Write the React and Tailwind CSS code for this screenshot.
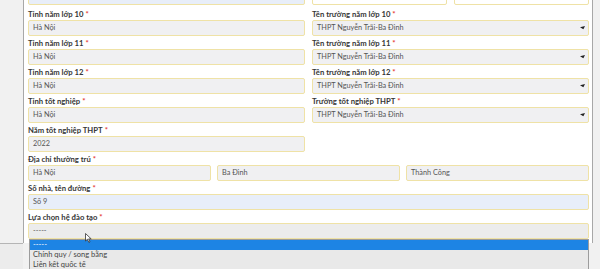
import React from 'react';

const Req = () => <span className="text-[#e53935] ml-[2px]">*</span>;

function Field({ label, children }) {
  return (
    <div className="flex flex-col">
      <div className="h-[13px] flex items-end pb-[1px] text-[7.7px] leading-[9px] font-bold text-[#363636]">
        {label}
        <Req />
      </div>
      {children}
    </div>
  );
}

function Box({ value, select, tone = 'bg-[#f0f0f2]' }) {
  return (
    <div className={`h-[16px] border border-[#efe2a6] rounded-[2px] ${tone} flex items-center justify-between pl-[4px] pr-[3px] text-[7.3px] text-[#555]`}>
      <span>{value}</span>
      {select && (
        <svg width="5" height="4" viewBox="0 0 5 4">
          <path d="M0 1.2 L5 0 L3.4 3.2 Z" fill="#222" />
        </svg>
      )}
    </div>
  );
}

export default function App() {
  const school = 'THPT Nguyễn Trãi-Ba Đình';
  return (
    <div className="relative w-[600px] h-[269px] overflow-hidden flex bg-[#f1f1f1] font-['Lato','Noto_Sans',sans-serif]">
      {/* left gutter */}
      <div className="w-[23px] flex flex-col">
        <div className="h-[243px]" />
        <div className="flex-1 border-t border-[#b5b5b5] bg-[#ececec]" />
      </div>

      {/* form panel */}
      <div className="w-[570px] h-[243px] flex flex-col bg-white border-l border-r border-[#a8a8a8] pl-[4px] pr-[3px]">
        <div className="h-[7px] flex flex-col">
          <div className="grid grid-cols-2 gap-x-[7px] mt-[-11px]">
            <Box value="" tone="bg-[#e8eef9]" />
            <div className="grid grid-cols-2 gap-x-[7px]">
              <Box value="" tone="bg-white" />
              <Box value="" tone="bg-white" />
            </div>
          </div>
        </div>

        <div className="grid grid-cols-2 gap-x-[7px]">
          <Field label="Tỉnh năm lớp 10"><Box value="Hà Nội" /></Field>
          <Field label="Tên trường năm lớp 10"><Box value={school} select /></Field>
          <Field label="Tỉnh năm lớp 11"><Box value="Hà Nội" /></Field>
          <Field label="Tên trường năm lớp 11"><Box value={school} select /></Field>
          <Field label="Tỉnh năm lớp 12"><Box value="Hà Nội" /></Field>
          <Field label="Tên trường năm lớp 12"><Box value={school} select /></Field>
          <Field label="Tỉnh tốt nghiệp"><Box value="Hà Nội" /></Field>
          <Field label="Trường tốt nghiệp THPT"><Box value={school} select /></Field>
          <Field label="Năm tốt nghiệp THPT"><Box value="2022" /></Field>
          <div />
        </div>

        <Field label="Địa chỉ thường trú">
          <div className="grid grid-cols-3 gap-x-[6px]">
            <Box value="Hà Nội" />
            <Box value="Ba Đình" />
            <Box value="Thành Công" />
          </div>
        </Field>

        <Field label="Số nhà, tên đường">
          <Box value="Số 9" tone="bg-[#e8eef9]" />
        </Field>

        <Field label="Lựa chọn hệ đào tạo">
          <Box value="-----" tone="bg-[#ececec]" />
        </Field>
      </div>

      {/* right gutter */}
      <div className="flex-1" />

      {/* open select list */}
      <div className="absolute left-[29px] top-[239px] w-[560px] h-[40px] bg-[#e9e9e9] border border-[#9c9c9c] text-[7.5px] text-[#444]">
        <div className="h-[10px] bg-[#1d84e4] text-white flex items-center pl-[3px]">-----</div>
        <div className="h-[10px] flex items-center pl-[3px]">Chính quy / song bằng</div>
        <div className="h-[10px] flex items-center pl-[3px]">Liên kết quốc tế</div>
      </div>

      {/* mouse cursor */}
      <svg className="absolute left-[85px] top-[233px]" width="7" height="10" viewBox="0 0 7 10">
        <path d="M0.5 0.5 L0.5 8 L2.4 6.3 L3.8 9.3 L5 8.8 L3.6 5.9 L6.2 5.9 Z" fill="#fff" stroke="#333" strokeWidth="0.8" />
      </svg>
    </div>
  );
}
